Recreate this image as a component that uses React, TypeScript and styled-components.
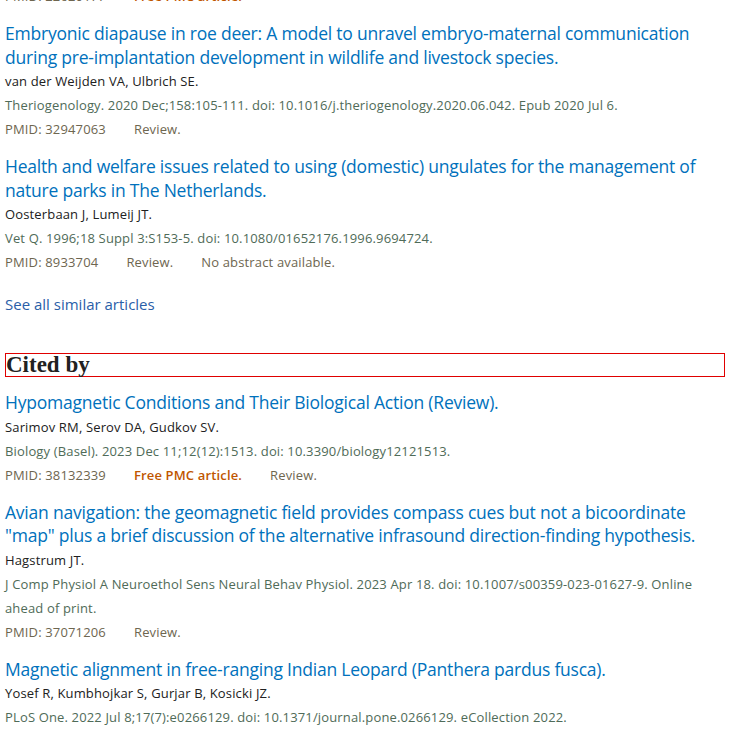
import React from "react";
import styled, { createGlobalStyle } from "styled-components";

const Global = createGlobalStyle`
  html, body { margin: 0; padding: 0; background: #fff; }
  body { font-family: "Open Sans", "Noto Sans", sans-serif; color: #212121; }
`;

const Page = styled.main`
  padding: 0 5px;
  margin-top: -16px;
  width: 720px;
`;

const Article = styled.article`
  margin-bottom: 14px;
`;

const Title = styled.a`
  display: block;
  color: #0071bc;
  text-decoration: none;
  font-size: 17.5px;
  letter-spacing: -0.22px;
  line-height: 23.5px;
`;

const Line = styled.div`
  font-size: 13px;
  letter-spacing: 0.15px;
  line-height: 24px;
`;

const Authors = styled(Line)`
  color: #212121;
`;

const Journal = styled(Line)`
  color: #4f6b58;
`;

const Meta = styled(Line)`
  display: flex;
  gap: 28px;
  color: #6e6650;
`;

const Free = styled.span`
  color: #c05600;
  font-weight: 600;
`;

const SeeAll = styled.a`
  display: block;
  margin-top: 18px;
  font-size: 15px;
  line-height: 24px;
  color: #2a5ea8;
  text-decoration: none;
`;

const Heading = styled.h2`
  margin: 37px 0 14px;
  border: 1px solid #e00000;
  height: 22px;
  font-family: "Liberation Serif", "DejaVu Serif", serif;
  font-weight: 700;
  font-size: 23px;
  line-height: 22px;
  padding-left: 0;
  color: #212121;
`;

type Item = {
  title: string;
  authors?: string;
  journal?: string;
  pmid: string;
  free?: boolean;
  review?: boolean;
  noAbstract?: boolean;
};

const ArticleItem = ({ a }: { a: Item }) => (
  <Article>
    <Title href="#">{a.title}</Title>
    {a.authors && <Authors>{a.authors}</Authors>}
    {a.journal && <Journal>{a.journal}</Journal>}
    <Meta>
      <span>PMID: {a.pmid}</span>
      {a.free && <Free>Free PMC article.</Free>}
      {a.review && <span>Review.</span>}
      {a.noAbstract && <span>No abstract available.</span>}
    </Meta>
  </Article>
);

const similar: Item[] = [
  {
    title:
      "Embryonic diapause in roe deer: A model to unravel embryo-maternal communication during pre-implantation development in wildlife and livestock species.",
    authors: "van der Weijden VA, Ulbrich SE.",
    journal:
      "Theriogenology. 2020 Dec;158:105-111. doi: 10.1016/j.theriogenology.2020.06.042. Epub 2020 Jul 6.",
    pmid: "32947063",
    review: true,
  },
  {
    title:
      "Health and welfare issues related to using (domestic) ungulates for the management of nature parks in The Netherlands.",
    authors: "Oosterbaan J, Lumeij JT.",
    journal: "Vet Q. 1996;18 Suppl 3:S153-5. doi: 10.1080/01652176.1996.9694724.",
    pmid: "8933704",
    review: true,
    noAbstract: true,
  },
];

const cited: Item[] = [
  {
    title: "Hypomagnetic Conditions and Their Biological Action (Review).",
    authors: "Sarimov RM, Serov DA, Gudkov SV.",
    journal: "Biology (Basel). 2023 Dec 11;12(12):1513. doi: 10.3390/biology12121513.",
    pmid: "38132339",
    free: true,
    review: true,
  },
  {
    title:
      "Avian navigation: the geomagnetic field provides compass cues but not a bicoordinate \"map\" plus a brief discussion of the alternative infrasound direction-finding hypothesis.",
    authors: "Hagstrum JT.",
    journal:
      "J Comp Physiol A Neuroethol Sens Neural Behav Physiol. 2023 Apr 18. doi: 10.1007/s00359-023-01627-9. Online ahead of print.",
    pmid: "37071206",
    review: true,
  },
];

export default function App() {
  return (
    <>
      <Global />
      <Page>
        <Article>
          <Meta>
            <span>PMID: 22620177</span>
            <Free>Free PMC article.</Free>
          </Meta>
        </Article>
        {similar.map((a) => (
          <ArticleItem key={a.pmid} a={a} />
        ))}
        <SeeAll href="#">See all similar articles</SeeAll>
        <Heading>Cited by</Heading>
        {cited.map((a) => (
          <ArticleItem key={a.pmid} a={a} />
        ))}
        <Article>
          <Title href="#">Magnetic alignment in free-ranging Indian Leopard (Panthera pardus fusca).</Title>
          <Authors>Yosef R, Kumbhojkar S, Gurjar B, Kosicki JZ.</Authors>
          <Journal>PLoS One. 2022 Jul 8;17(7):e0266129. doi: 10.1371/journal.pone.0266129. eCollection 2022.</Journal>
        </Article>
      </Page>
    </>
  );
}
